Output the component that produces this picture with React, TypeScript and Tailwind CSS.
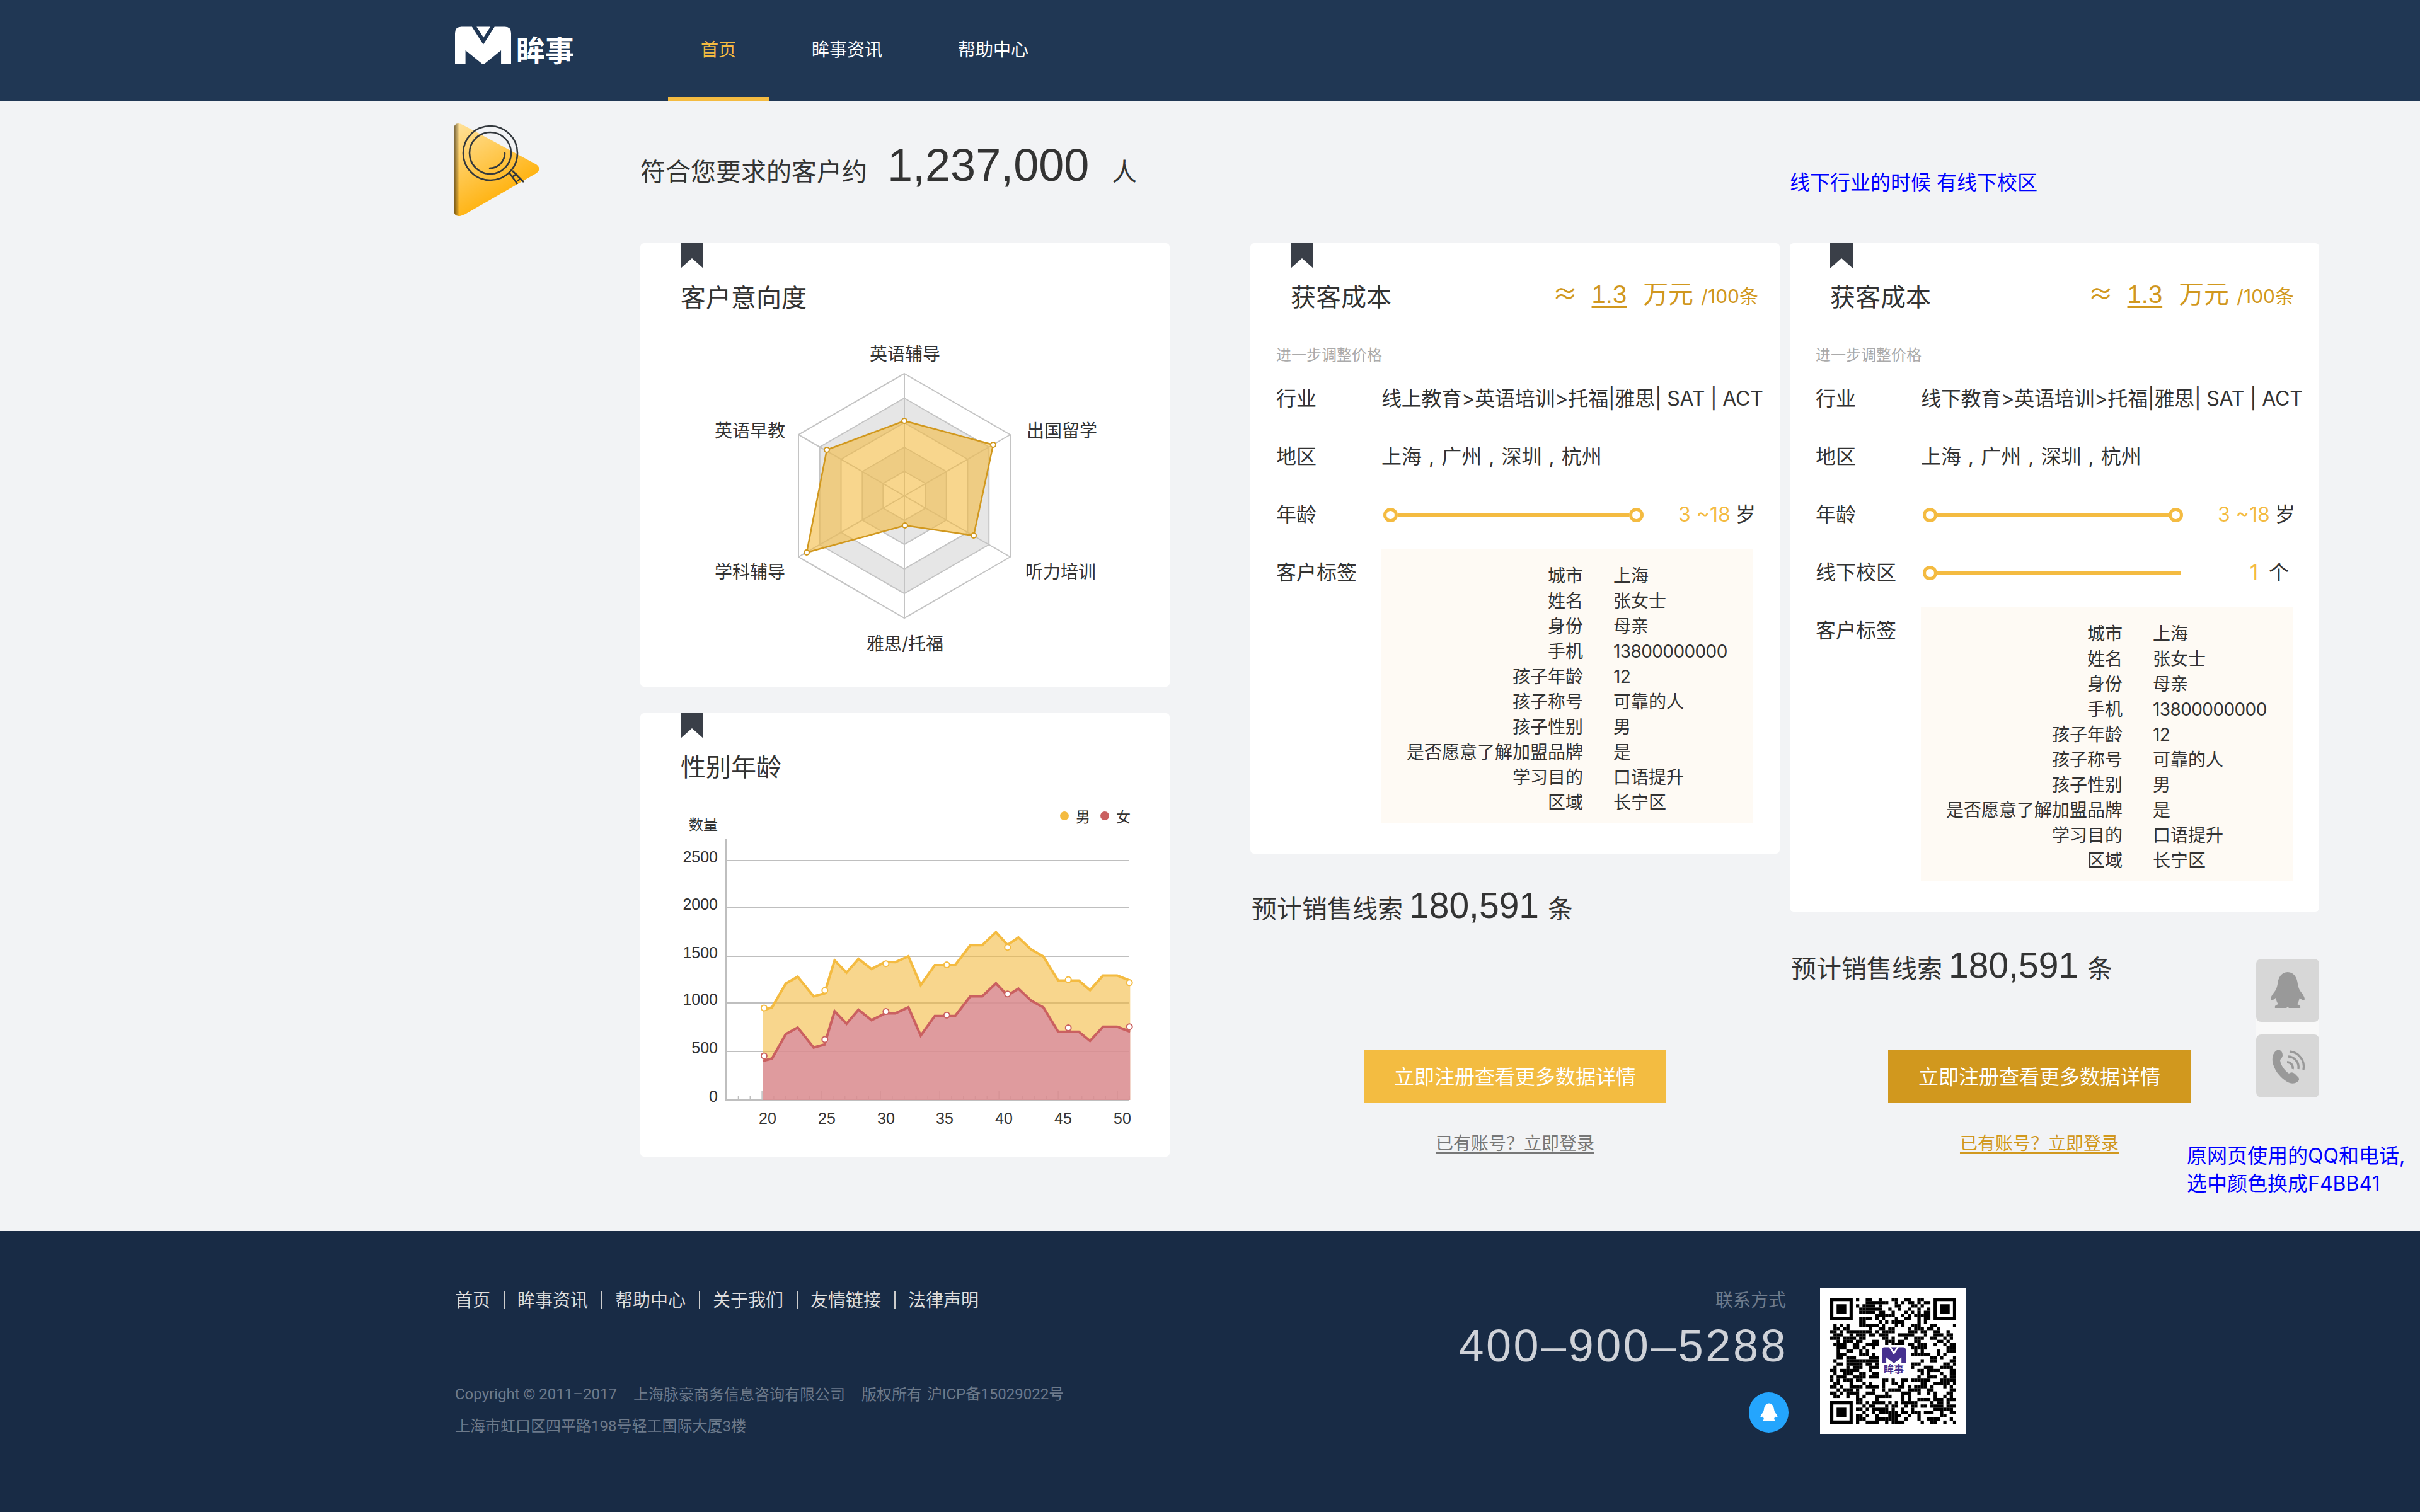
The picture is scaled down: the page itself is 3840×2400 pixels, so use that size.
const TAGS: [string, string][] = [
  ["城市", "上海"],
  ["姓名", "张女士"],
  ["身份", "母亲"],
  ["手机", "13800000000"],
  ["孩子年龄", "12"],
  ["孩子称号", "可靠的人"],
  ["孩子性别", "男"],
  ["是否愿意了解加盟品牌", "是"],
  ["学习目的", "口语提升"],
  ["区域", "长宁区"],
];

const FOOT_LINKS = ["首页", "眸事资讯", "帮助中心", "关于我们", "友情链接", "法律声明"];

// chart outline, read off the picture
const TOP_LINE: [number, number][] = [
  [366, 1025], [392, 1015], [430, 935], [463, 912], [507, 978], [537, 968], [565, 857], [598, 898],
  [631, 852], [667, 886], [705, 862], [733, 863], [769, 843], [803, 940], [842, 873], [898, 873],
  [940, 806], [973, 806], [1011, 762], [1043, 805], [1073, 780], [1108, 820], [1142, 844], [1183, 925],
  [1240, 925], [1271, 957], [1307, 908], [1346, 908], [1382, 925],
];
const LOW_LINE: [number, number][] = [
  [366, 1195], [392, 1187], [430, 1105], [463, 1083], [507, 1150], [537, 1140], [565, 1028], [598, 1070],
  [631, 1023], [667, 1058], [705, 1035], [733, 1035], [769, 1015], [803, 1110], [842, 1044], [898, 1044],
  [940, 978], [973, 978], [1011, 934], [1043, 975], [1073, 952], [1108, 992], [1142, 1015], [1183, 1097],
  [1240, 1097], [1271, 1128], [1307, 1080], [1346, 1080], [1382, 1097],
];
const TOP_DOTS: [number, number][] = [[370, 1017], [538, 958], [707, 868], [875, 872], [1043, 813], [1211, 922], [1380, 932]];
const LOW_DOTS: [number, number][] = [[370, 1178], [538, 1123], [707, 1029], [875, 1041], [1043, 970], [1211, 1084], [1380, 1080]];

const px = ([x, y]: [number, number]): [number, number] => [1000 + x / 1.742, 1120 + y / 2.119];
const toPts = (line: [number, number][]) => line.map(px).map((p) => p.join(",")).join(" ");

function Bookmark() {
  return (
    <svg className="absolute left-[64px] top-0" width="36" height="40" viewBox="0 0 36 40">
      <path d="M0 0H36V40L18 24L0 40Z" fill="#3a3f48" />
    </svg>
  );
}

function Penguin({ className, fill }: { className: string; fill: string }) {
  return (
    <svg className={className} viewBox="0 0 100 100">
      <path
        fill={fill}
        d="M50 21C60 21 65 30 66 40C67 45 68 48 70 51C73 55 77 60 77 64C76 67 72 65 69 62C68 66 67 69 65 72C69 73 71 75 70 78L52 78L50 76L48 78L30 78C29 75 31 73 35 72C33 69 32 66 31 62C28 65 24 67 23 64C23 60 27 55 30 51C32 48 33 45 34 40C35 30 40 21 50 21Z"
      />
    </svg>
  );
}

function LogoMark({ className, fill }: { className: string; fill: string }) {
  return (
    <svg className={className} viewBox="35 37 268 178">
      <path
        fill={fill}
        d="M35 215V68Q35 37 66 37H116L170 122L224 37H274Q303 37 303 68V215H255V150L175 215H165L85 150V215Z"
      />
      <path fill={fill} d="M138 37H204L171 88Z" />
    </svg>
  );
}

function SearchBadge() {
  return (
    <svg className="h-[170px] w-[160px]" viewBox="0 0 160 170">
      <defs>
        <linearGradient id="badgeFill" x1="0.1" y1="0" x2="0.6" y2="0.9">
          <stop offset="0" stopColor="#ffe096" />
          <stop offset="1" stopColor="#ffad00" />
        </linearGradient>
        <linearGradient id="badgeEdge" gradientUnits="userSpaceOnUse" x1="10" y1="0" x2="19" y2="0">
          <stop offset="0" stopColor="#3a2c10" stopOpacity="0.75" />
          <stop offset="1" stopColor="#3a2c10" stopOpacity="0" />
        </linearGradient>
      </defs>
      <path d="M10 22Q10 5 26 14L141 76Q150 83 141 90L28 155Q10 164 10 147Z" fill="url(#badgeFill)" />
      <path d="M10 22Q10 5 26 14L141 76Q150 83 141 90L28 155Q10 164 10 147Z" fill="url(#badgeEdge)" />
      <g fill="none" stroke="#33383d" strokeWidth="2.6">
        <circle cx="68" cy="58" r="43" />
        <circle cx="68" cy="58" r="33" />
        <path d="M91 58A24 24 0 0 1 67 82" strokeLinecap="round" />
        <path d="M98 89L111 107M103 86L121 104M104 95L111 91M111 102L117 98" />
      </g>
    </svg>
  );
}

function PhoneGlyph() {
  return (
    <svg className="h-[100px] w-[100px]" viewBox="0 0 100 100">
      <path
        fill="#999999"
        d="M33 25C38 23 42 27 42 33C42 37 39 38 38 41C39 49 45 57 52 62C55 60 58 59 62 63L67 68C69 71 68 74 64 76C60 79 52 78 46 73C36 66 28 55 26 43C25 34 28 28 33 25Z"
      />
      <g fill="none" stroke="#999999" strokeWidth="3.4">
        <path d="M53 27A24 24 0 0 1 75 56" />
        <path d="M51 35A17 17 0 0 1 67 55" />
        <path d="M49 44A9 9 0 0 1 58 55" />
      </g>
    </svg>
  );
}

function Radar() {
  const cx = 1435;
  const cy = 787;
  const hex = (r: number) =>
    [0, 1, 2, 3, 4, 5]
      .map((i) => {
        const a = (Math.PI / 3) * i;
        return `${cx + r * Math.sin(a)},${cy - r * Math.cos(a)}`;
      })
      .join(" ");
  const data: [number, number][] = [
    [1435, 668], [1576, 706], [1545, 850], [1436, 834], [1280, 877], [1312, 714],
  ];
  const labels: [string, number, number, "middle" | "start" | "end"][] = [
    ["英语辅导", 1436, 562, "middle"],
    ["出国留学", 1629, 684, "start"],
    ["听力培训", 1627, 908, "start"],
    ["雅思/托福", 1436, 1022, "middle"],
    ["学科辅导", 1246, 908, "end"],
    ["英语早教", 1246, 684, "end"],
  ];
  return (
    <svg className="block" width="840" height="579" viewBox="1016 511 840 579">
      <polygon points={hex(194)} fill="#ffffff" stroke="#c4c4c4" strokeWidth="2" />
      <polygon points={hex(155)} fill="#e6e6e6" stroke="#c4c4c4" strokeWidth="2" />
      <polygon points={hex(116)} fill="#ffffff" stroke="#c4c4c4" strokeWidth="2" />
      <polygon points={hex(77)} fill="#e6e6e6" stroke="#c4c4c4" strokeWidth="2" />
      <polygon points={hex(39)} fill="#ffffff" stroke="#c4c4c4" strokeWidth="2" />
      {[0, 1, 2, 3, 4, 5].map((i) => {
        const a = (Math.PI / 3) * i;
        return (
          <line key={i} x1={cx} y1={cy} x2={cx + 194 * Math.sin(a)} y2={cy - 194 * Math.cos(a)} stroke="#c4c4c4" strokeWidth="2" />
        );
      })}
      <polygon
        points={data.map((p) => p.join(",")).join(" ")}
        fill="#f4bb41"
        fillOpacity="0.6"
        stroke="#d1981e"
        strokeWidth="2.5"
      />
      {data.map(([x, y]) => (
        <circle key={x} cx={x} cy={y} r="4" fill="#ffffff" stroke="#d1981e" strokeWidth="2" />
      ))}
      {labels.map(([t, x, y, anchor]) => (
        <text key={t} x={x} y={y + 10} textAnchor={anchor} fontSize="28" fill="#333333">
          {t}
        </text>
      ))}
    </svg>
  );
}

function AgeChart() {
  const grid: [string, number][] = [
    ["2500", 1366], ["2000", 1441], ["1500", 1518], ["1000", 1592], ["500", 1669], ["0", 1746],
  ];
  const xLabels: [string, number][] = [
    ["20", 1218], ["25", 1312], ["30", 1406], ["35", 1499], ["40", 1593], ["45", 1687], ["50", 1781],
  ];
  const ticks = Array.from({ length: 34 }, (_, i) => 1171.5 + i * 18.8);
  const topPts = toPts(TOP_LINE);
  const lowPts = toPts(LOW_LINE);
  const startX = px(TOP_LINE[0])[0];
  const endX = px(TOP_LINE[TOP_LINE.length - 1])[0];
  return (
    <svg className="block" width="840" height="578" viewBox="1016 1258 840 578">
      <text x="1139" y="1317" textAnchor="end" fontSize="23" fill="#333333">数量</text>
      <circle cx="1689" cy="1295" r="7" fill="#f4bb41" />
      <text x="1707" y="1305" fontSize="23" fill="#333333">男</text>
      <circle cx="1753" cy="1295" r="7" fill="#ca6060" />
      <text x="1771" y="1305" fontSize="23" fill="#333333">女</text>

      {grid.map(([t, y]) => (
        <g key={t}>
          <line x1="1152" x2="1792" y1={y} y2={y} stroke="#bfbfbf" strokeWidth="2" />
          <text x="1139" y={y - 4} textAnchor="end" fontSize="25" fill="#333333" className="font-['Liberation_Sans']" dominantBaseline="middle">
            {t}
          </text>
        </g>
      ))}
      <line x1="1152" x2="1152" y1="1331" y2="1747" stroke="#bfbfbf" strokeWidth="2" />
      {ticks.map((x, i) => (
        <line key={x} x1={x} x2={x} y1="1746" y2={(i + 3) % 5 === 0 ? 1731 : 1739} stroke="#bfbfbf" strokeWidth="1.5" />
      ))}

      <polygon points={`${startX},1746 ${topPts} ${endX},1746`} fill="#f4bb41" fillOpacity="0.6" />
      <polygon points={`${startX},1746 ${lowPts} ${endX},1746`} fill="#d482a5" fillOpacity="0.7" />
      <polyline points={topPts} fill="none" stroke="#f4bb41" strokeWidth="4" />
      <polyline points={lowPts} fill="none" stroke="#ca6060" strokeWidth="4" />
      {TOP_DOTS.map(px).map(([x, y]) => (
        <circle key={x} cx={x} cy={y} r="4.5" fill="#ffffff" stroke="#f4bb41" strokeWidth="2" />
      ))}
      {LOW_DOTS.map(px).map(([x, y]) => (
        <circle key={x} cx={x} cy={y} r="4.5" fill="#ffffff" stroke="#ca6060" strokeWidth="2" />
      ))}

      {xLabels.map(([t, x]) => (
        <text key={t} x={x} y="1784" textAnchor="middle" fontSize="25" fill="#333333" className="font-['Liberation_Sans']">
          {t}
        </text>
      ))}
    </svg>
  );
}

function QrCode() {
  const n = 39;
  const finder = (x: number, y: number) => (
    <g key={`${x}-${y}`}>
      <path d={`M${x} ${y}h7v7h-7zM${x + 1} ${y + 1}v5h5v-5z`} fillRule="evenodd" fill="#000" />
      <rect x={x + 2} y={y + 2} width="3" height="3" fill="#000" />
    </g>
  );
  const cells: React.ReactNode[] = [];
  let seed = 7331;
  for (let y = 0; y < n; y++) {
    for (let x = 0; x < n; x++) {
      seed = (seed * 1103515245 + 12345) & 0x7fffffff;
      const inFinder = (x < 8 && y < 8) || (x > n - 9 && y < 8) || (x < 8 && y > n - 9);
      const inLogo = x > 14 && x < 25 && y > 14 && y < 25;
      if (!inFinder && !inLogo && (seed >> 12) % 100 < 52) {
        cells.push(<rect key={`${x}:${y}`} x={x} y={y} width="1.02" height="1.02" fill="#000" />);
      }
    }
  }
  return (
    <div className="relative h-[232px] w-[232px] shrink-0 bg-white">
      <svg className="absolute left-[16px] top-[16px] h-[200px] w-[200px]" viewBox={`0 0 ${n} ${n}`}>
        {cells}
        {finder(0, 0)}
        {finder(n - 7, 0)}
        {finder(0, n - 7)}
      </svg>
      <div className="absolute left-[93px] top-[91px] flex h-[52px] w-[48px] flex-col items-center rounded-[6px] bg-white pt-[3px]">
        <LogoMark className="h-[26px] w-[38px]" fill="#46318f" />
        <span className="text-[16px] font-bold leading-[18px] text-[#46318f]">眸事</span>
      </div>
    </div>
  );
}

function RangeRow({ label, value, unit, single }: { label: string; value: string; unit: string; single?: boolean }) {
  return (
    <div className="flex h-[92px] items-center">
      <span className="w-[167px] shrink-0">{label}</span>
      <div className={`ml-[3px] flex items-center ${single ? "w-[409px]" : "w-[413px]"}`}>
        <span className="h-[23px] w-[23px] shrink-0 rounded-full border-[5px] border-[#f4bb41] bg-white" />
        <span className="h-[6px] flex-1 bg-[#f4bb41]" />
        {!single && <span className="h-[23px] w-[23px] shrink-0 rounded-full border-[5px] border-[#f4bb41] bg-white" />}
      </div>
      {single ? (
        <span className="ml-[110px] w-[30px] text-[#f4bb41]">{value}</span>
      ) : (
        <span className={`whitespace-nowrap text-[#f4bb41] ${value ? "w-[146px] pl-[55px]" : ""}`}>{value}</span>
      )}
      <span>{unit}</span>
    </div>
  );
}

function CostCard({ region, extra }: { region: string; extra?: boolean }) {
  return (
    <div className="relative rounded-[6px] bg-white pb-[49px] pl-[41px] pr-[34px] pt-[47px] text-[32px] text-[#333]">
      <Bookmark />
      <div className="flex h-[78px] items-center justify-between">
        <h3 className="ml-[23px] text-[40px] font-normal">获客成本</h3>
        <div className={`flex items-baseline pb-[14px] text-[#d1981e] ${extra ? "mr-[6px]" : ""}`}>
          <span className="font-['Noto_Sans_CJK_SC'] text-[40px]">≈</span>
          <span className="ml-[22px] font-['Liberation_Sans'] text-[40px] underline underline-offset-4">1.3</span>
          <span className="ml-[26px] text-[40px]">万元</span>
          <span className="ml-[12px] text-[30px]">/100条</span>
        </div>
      </div>
      <p className="mt-[32px] h-[44px] text-[24px] leading-[42px] text-[#aaaaaa]">进一步调整价格</p>
      <div className="flex h-[92px] items-center whitespace-nowrap">
        <span className="w-[167px] shrink-0">行业</span>
        <span className="tracking-[-0.2px]">{region}</span>
      </div>
      <div className="flex h-[92px] items-center">
        <span className="w-[167px] shrink-0">地区</span>
        <span className="[word-spacing:2px]">上海 , 广州 , 深圳 , 杭州</span>
      </div>
      <RangeRow label="年龄" value="3 ~18" unit="岁" />
      {extra && <RangeRow label="线下校区" value="1" unit="个" single />}
      <div className="flex items-start">
        <span className="w-[167px] shrink-0 leading-[92px]">客户标签</span>
        <div className="mt-[9px] w-[590px] bg-[#fefaf4] pb-[12px] pt-[22px] text-[28px] leading-[40px]">
          {TAGS.map(([k, v]) => (
            <div key={k} className="flex">
              <span className="w-[320px] text-right">{k}</span>
              <span className={`ml-[48px] ${/^\d/.test(v) ? "tracking-[-0.6px]" : ""}`}>{v}</span>
            </div>
          ))}
        </div>
      </div>
    </div>
  );
}

function LeadCount() {
  return (
    <div className="ml-[2px] flex h-[80px] items-baseline text-[40px] text-[#333]">
      <span>预计销售线索</span>
      <span className="ml-[10px] font-['Liberation_Sans'] text-[57px]">180,591</span>
      <span className="ml-[14px]">条</span>
    </div>
  );
}

function Cta({ active, gap, indent }: { active?: boolean; gap: string; indent: string }) {
  return (
    <div className={`w-[480px] text-center ${gap} ${indent}`}>
      <button className={`h-[84px] w-[480px] pt-[2px] text-[32px] text-white ${active ? "bg-[#d1981e]" : "bg-[#f3bc41]"}`}>
        立即注册查看更多数据详情
      </button>
      <a className={`mt-[44px] block text-[28px] leading-[40px] underline underline-offset-4 ${active ? "text-[#d1981e]" : "text-[#777777]"}`}>
        已有账号？立即登录
      </a>
    </div>
  );
}

export default function App() {
  return (
    <div className="min-h-[2400px] w-[3840px] bg-[#f2f3f5] font-['Inter','Noto_Sans_CJK_SC',sans-serif]">
      <header className="flex h-[160px] bg-[#203754] pl-[722px]">
        <div className="flex w-[188px] items-start pt-[42px]">
          <LogoMark className="h-[60px] w-[89px] shrink-0" fill="#ffffff" />
          <span className="ml-[8px] mt-[13px] whitespace-nowrap text-[46px] font-bold leading-[50px] text-white">眸事</span>
        </div>
        <nav className="ml-[150px] flex gap-[16px] text-[28px] text-white">
          <a className="flex h-[160px] items-center border-b-[6px] border-[#f4bb41] px-[52px] pt-[3px] text-[#f4bb41]">首页</a>
          <a className="flex h-[160px] items-center border-b-[6px] border-transparent px-[52px] pt-[3px]">眸事资讯</a>
          <a className="flex h-[160px] items-center border-b-[6px] border-transparent px-[52px] pt-[3px]">帮助中心</a>
        </nav>
      </header>

      <main className="relative flex h-[1794px] pl-[720px]">
        <div className="w-[296px] shrink-0 pt-[25px]">
          <div className="-ml-[10px]">
            <SearchBadge />
          </div>
        </div>

        <div className="w-[2664px]">
          <div className="flex h-[226px]">
            <div className="flex w-[1824px] items-baseline pt-[48px] text-[40px] text-[#333]">
              <span>符合您要求的客户约</span>
              <span className="ml-[32px] font-['Liberation_Sans'] text-[72px]">1,237,000</span>
              <span className="ml-[36px]">人</span>
            </div>
            <p className="pt-[110px] text-[32px] leading-[40px] text-[#0000ff]">线下行业的时候 有线下校区</p>
          </div>

          <div className="flex items-start">
            <div className="w-[840px] shrink-0">
              <section className="relative h-[704px] rounded-[6px] bg-white pt-[47px] text-[#333]">
                <Bookmark />
                <h3 className="ml-[64px] h-[78px] text-[40px] font-normal leading-[80px]">客户意向度</h3>
                <Radar />
              </section>
              <section className="relative mt-[42px] h-[704px] rounded-[6px] bg-white pt-[46px] text-[#333]">
                <Bookmark />
                <h3 className="ml-[64px] h-[80px] text-[40px] font-normal leading-[80px]">性别年龄</h3>
                <AgeChart />
              </section>
            </div>

            <div className="ml-[128px] w-[840px] shrink-0">
              <CostCard region="线上教育>英语培训>托福|雅思| SAT | ACT" />
              <div className="mt-[40px]">
                <LeadCount />
              </div>
              <Cta gap="mt-[192px]" indent="ml-[180px]" />
            </div>

            <div className="ml-[16px] w-[840px] shrink-0">
              <CostCard region="线下教育>英语培训>托福|雅思| SAT | ACT" extra />
              <div className="mt-[43px]">
                <LeadCount />
              </div>
              <Cta active gap="mt-[97px]" indent="ml-[156px]" />
            </div>
          </div>
        </div>

        <div className="absolute left-[3580px] top-[1362px] flex w-[100px] flex-col gap-[20px] rounded-[8px] bg-[#f8f8f8]">
          <div className="h-[100px] rounded-[8px] bg-[#d7d7d7]">
            <Penguin className="h-[100px] w-[100px]" fill="#999999" />
          </div>
          <div className="h-[100px] rounded-[8px] bg-[#d7d7d7]">
            <PhoneGlyph />
          </div>
        </div>

        <p className="absolute left-[3470px] top-[1653px] whitespace-nowrap text-[32px] leading-[44px] text-[#0000ff]">
          原网页使用的QQ和电话,
          <br />
          选中颜色换成F4BB41
        </p>
      </main>

      <footer className="h-[446px] bg-[#182b45] pl-[722px] pt-[90px]">
        <div className="flex w-[2398px] justify-between">
          <div>
            <div className="flex items-center gap-[20.5px] text-[28px] leading-[40px] text-[#dddddd]">
              {FOOT_LINKS.map((t, i) => (
                <div key={t} className="flex items-center gap-[20.5px]">
                  {i > 0 && <span className="h-[28px] w-[2px] bg-[#cccccc]" />}
                  <a>{t}</a>
                </div>
              ))}
            </div>
            <div className="mt-[105px] text-[24px] leading-[49px] text-[#6d7a8b]">
              <p className="flex">
                <span className="font-['Roboto',sans-serif]">Copyright © 2011–2017</span>
                <span className="ml-[26px]">上海脉豪商务信息咨询有限公司</span>
                <span className="ml-[26px]">版权所有</span>
                <span className="ml-[8px] font-['Roboto','Noto_Sans_CJK_SC',sans-serif]">沪ICP备15029022号</span>
              </p>
              <p className="pt-[2px] font-['Roboto','Noto_Sans_CJK_SC',sans-serif]">上海市虹口区四平路198号轻工国际大厦3楼</p>
            </div>
          </div>

          <div className="flex items-start gap-[54px]">
            <div className="flex flex-col items-end">
              <span className="text-[28px] leading-[40px] text-[#6d7a8b]">联系方式</span>
              <span className="-mr-[3px] mt-[16px] font-['Liberation_Sans'] text-[72px] leading-[72px] tracking-[3.5px] text-[#cfd2d8]">400–900–5288</span>
              <span className="-mr-[4px] mt-[38px] flex h-[64px] w-[63px] items-center justify-center rounded-full bg-[#24a5fd]">
                <Penguin className="h-[50px] w-[50px]" fill="#ffffff" />
              </span>
            </div>
            <QrCode />
          </div>
        </div>
      </footer>
    </div>
  );
}
